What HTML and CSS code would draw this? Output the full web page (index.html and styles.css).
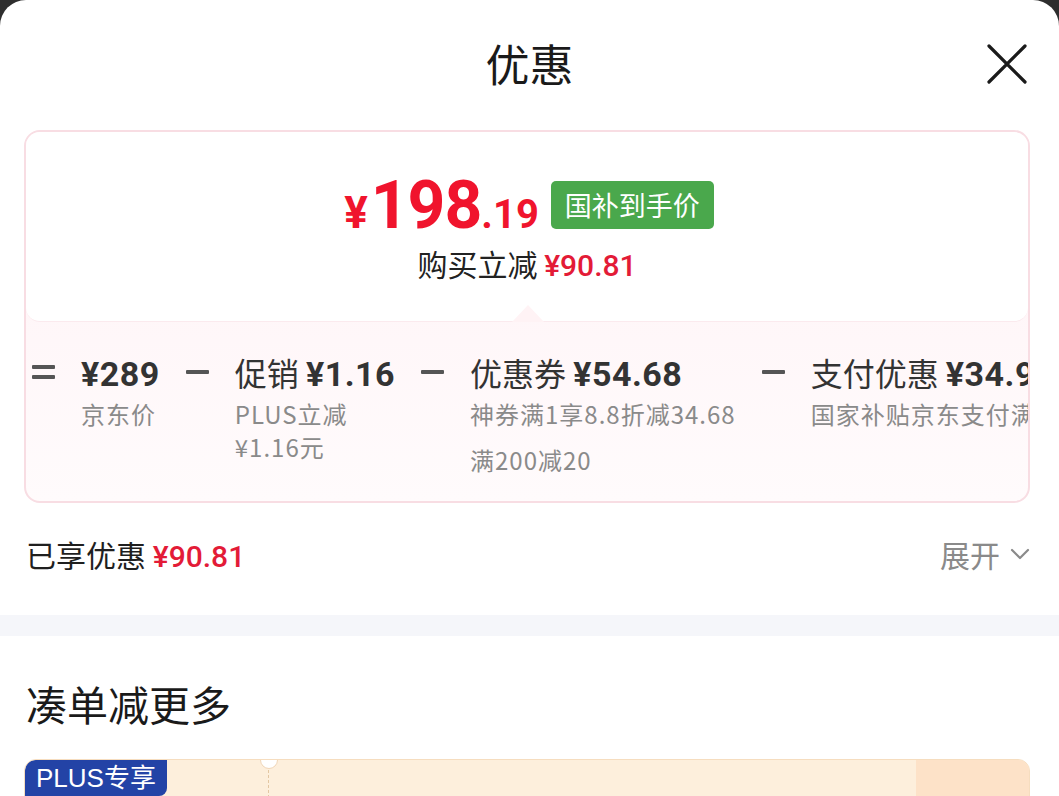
FILE: index.html
```html
<!DOCTYPE html>
<html lang="zh-CN">
<head>
<meta charset="utf-8">
<title>优惠</title>
<link rel="stylesheet" href="styles.css">
</head>
<body>
<div class="sheet">
  <header class="header">
    <h1 class="title">优惠</h1>
    <button class="close" aria-label="关闭">
      <svg width="40" height="40" viewBox="0 0 40 40"><path d="M2 2 L38 38 M38 2 L2 38" stroke="#1a1a1a" stroke-width="3.2" stroke-linecap="round" fill="none"/></svg>
    </button>
  </header>

  <section class="card">
    <div class="card-top">
      <div class="price-row">
        <span class="price"><span class="yen">¥</span><span class="int">198</span><span class="dec">.19</span></span>
        <span class="tag-green">国补到手价</span>
      </div>
      <div class="save-line">购买立减 <span class="red">¥90.81</span></div>
    </div>
    <div class="card-bottom">
      <div class="calc">
        <span class="op op-eq"></span>
        <div class="item">
          <div class="main"><b>¥289</b></div>
          <div class="sub">京东价</div>
        </div>
        <span class="op op-minus"></span>
        <div class="item">
          <div class="main">促销 <b>¥1.16</b></div>
          <div class="sub">PLUS立减<br>¥1.16元</div>
        </div>
        <span class="op op-minus"></span>
        <div class="item">
          <div class="main">优惠券 <b>¥54.68</b></div>
          <div class="sub">神券满1享8.8折减34.68</div>
          <div class="sub sub-gap">满200减20</div>
        </div>
        <span class="op op-minus"></span>
        <div class="item">
          <div class="main">支付优惠 <b>¥34.90</b></div>
          <div class="sub">国家补贴京东支付满减</div>
        </div>
      </div>
    </div>
  </section>

  <div class="enjoyed">
    <div class="enjoyed-left">已享优惠 <span class="red">¥90.81</span></div>
    <div class="expand">展开
      <svg width="20" height="12" viewBox="0 0 20 12"><path d="M2 2 L10 10 L18 2" stroke="#8a8a8a" stroke-width="2.2" fill="none" stroke-linecap="round" stroke-linejoin="round"/></svg>
    </div>
  </div>

  <div class="band"></div>

  <h2 class="more-title">凑单减更多</h2>

  <div class="plus-card">
    <span class="plus-tag">PLUS专享</span>
    <div class="plus-left"></div>
    <div class="plus-mid"></div>
    <div class="plus-right"></div>
  </div>
</div>
</body>
</html>
```

FILE: styles.css
```css
* { box-sizing: border-box; }
html, body { margin: 0; padding: 0; }
body {
  background: #2e2e2e;
  font-family: "Noto Sans CJK SC", "Noto Sans", sans-serif;
  color: #1f1f1f;
  width: 1059px;
  height: 796px;
  overflow: hidden;
}
.sheet {
  background: #fff;
  border-radius: 26px 26px 0 0;
  height: 796px;
  overflow: hidden;
}
.header {
  height: 130px;
  display: flex;
  align-items: center;
  justify-content: center;
  position: relative;
}
.title {
  margin: 0;
  font-size: 44px;
  font-weight: 400;
  line-height: 1;
  margin-top: -4px;
  color: #1a1a1a;
}
.close {
  position: absolute;
  right: 32px;
  top: 44px;
  width: 40px;
  height: 40px;
  padding: 0;
  border: 0;
  background: none;
}
.close svg { display: block; }

.card {
  margin-left: 24px;
  width: 1006px;
  height: 373px;
  border: 2px solid #f8dde3;
  border-radius: 16px;
  overflow: hidden;
  background: linear-gradient(#fff2f5, #fffbfc);
  display: flex;
  flex-direction: column;
}
.card-top {
  height: 190px;
  background: #fff;
  position: relative;
  display: flex;
  flex-direction: column;
  align-items: center;
  padding-top: 48px;
  border-bottom: 1px solid #fbeaee;
  border-radius: 0 0 14px 14px;
}
.card-top::after {
  content: "";
  position: absolute;
  left: 486px;
  bottom: -1px;
  width: 32px;
  height: 17px;
  background: #fff3f5;
  clip-path: polygon(50% 0, 100% 100%, 0 100%);
}
.price-row {
  display: flex;
  align-items: center;
  gap: 12px;
  height: 52px;
  margin-left: 4px;
}
.price {
  color: #f0142d;
  font-family: "Roboto", "Noto Sans", sans-serif;
  font-weight: 700;
  line-height: 1;
  display: flex;
  align-items: baseline;
}
.price .yen { font-size: 44px; margin-right: 3px; }
.price .int { font-size: 66px; letter-spacing: -1px; }
.price .dec { font-size: 40px; }
.tag-green {
  background: #4aa84c;
  color: #fff;
  font-size: 27px;
  line-height: 48px;
  height: 48px;
  padding: 0 14px;
  border-radius: 5px;
  margin-top: -2px;
}
.save-line {
  margin-top: 10px;
  font-size: 30px;
  line-height: 42px;
  color: #222;
}
.red {
  color: #e31b37;
  font-family: "Roboto", "Noto Sans CJK SC", sans-serif;
  font-weight: 500;
}

.card-bottom {
  flex: 1;
  padding: 27px 0 0 6px;
  overflow: hidden;
}
.calc {
  display: flex;
  align-items: flex-start;
  gap: 26px;
  white-space: nowrap;
}
.op {
  width: 23px;
  height: 46px;
  flex: none;
  position: relative;
}
.op::before, .op::after {
  content: "";
  position: absolute;
  left: 0;
  width: 23px;
  height: 4px;
  background: #555;
  border-radius: 1px;
}
.op-minus::before { top: 21px; }
.op-minus::after { display: none; }
.op-eq::before { top: 16px; }
.op-eq::after { top: 26px; }
.item .main {
  font-size: 32px;
  line-height: 46px;
  color: #333;
}
.item .main b {
  font-family: "Roboto", "Noto Sans", sans-serif;
  font-weight: 700;
  font-size: 34px;
  letter-spacing: 0.5px;
  color: #333;
}
.item .sub {
  font-family: "Noto Sans CJK SC", sans-serif;
  font-size: 24px;
  letter-spacing: 1px;
  line-height: 33px;
  color: #8a8a8a;
}
.item .sub-gap { margin-top: 13px; }

.enjoyed {
  display: flex;
  justify-content: space-between;
  align-items: center;
  height: 46px;
  margin: 28px 29px 0 26px;
}
.enjoyed-left {
  font-size: 30px;
  color: #1f1f1f;
}
.enjoyed-left .red { font-size: 30px; }
.expand {
  font-size: 30px;
  color: #8a8a8a;
  display: flex;
  align-items: center;
  gap: 10px;
}
.band {
  height: 21px;
  background: #f5f6fa;
  margin-top: 38px;
}
.more-title {
  margin: 41px 0 0 26px;
  font-size: 41px;
  font-weight: 400;
  line-height: 52px;
  color: #1a1a1a;
}
.plus-card {
  margin: 30px 29px 0 24px;
  height: 60px;
  background: #fdefdc;
  border: 1px solid #f6ddbf;
  border-radius: 12px;
  display: flex;
  overflow: hidden;
  position: relative;
}
.plus-tag {
  position: absolute;
  left: 0;
  top: 0;
  background: #2343a6;
  color: #fff;
  font-size: 26px;
  line-height: 36px;
  padding: 0 11px;
  border-radius: 10px 0 8px 0;
  font-family: "Liberation Sans", "Noto Sans CJK SC", sans-serif;
}
.plus-left { width: 243px; }
.plus-mid {
  flex: 1;
  border-left: 1px dashed #e3c7a3;
  position: relative;
}
.plus-mid::before {
  content: "";
  position: absolute;
  left: -9px;
  top: -9px;
  width: 16px;
  height: 16px;
  border-radius: 50%;
  background: #fff;
  border: 1px solid #f0d6b8;
}
.plus-right {
  width: 113px;
  background: #fde2c8;
}
```
